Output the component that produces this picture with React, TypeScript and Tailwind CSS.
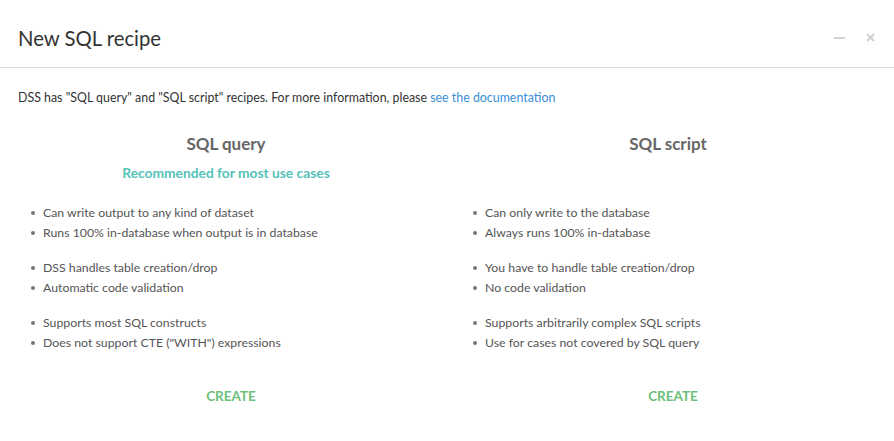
const queryGroups = [
  ["Can write output to any kind of dataset", "Runs 100% in-database when output is in database"],
  ["DSS handles table creation/drop", "Automatic code validation"],
  ["Supports most SQL constructs", 'Does not support CTE ("WITH") expressions'],
]

const scriptGroups = [
  ["Can only write to the database", "Always runs 100% in-database"],
  ["You have to handle table creation/drop", "No code validation"],
  ["Supports arbitrarily complex SQL scripts", "Use for cases not covered by SQL query"],
]

function RecipeColumn({ title, subtitle, groups }: { title: string; subtitle?: string; groups: string[][] }) {
  return (
    <div className="flex flex-col">
      <h3 className="text-center text-[17px] font-bold text-[#666] leading-[24px] h-[24px]">{title}</h3>
      <div className="text-center text-[13.8px] font-bold text-[#55c2b8] leading-[20px] h-[20px] mt-[7px]">
        {subtitle}
      </div>
      <div className="flex flex-col gap-[15px] mt-[20px] pl-[24px]">
        {groups.map((g, i) => (
          <ul key={i} className="flex flex-col">
            {g.map((item) => (
              <li key={item} className="flex items-center text-[12.3px] leading-[20px] text-[#555]">
                <span className="w-[4px] h-[4px] rounded-full bg-[#777] mr-[8px] ml-[2px]" />
                {item}
              </li>
            ))}
          </ul>
        ))}
      </div>
      <button className="mt-[33px] ml-[10px] self-center text-[13.5px] font-bold text-[#6cc17a] leading-[20px]">
        CREATE
      </button>
    </div>
  )
}

export default function App() {
  return (
    <div className="w-[894px] h-[441px] bg-white font-['Lato',sans-serif] text-[#333]">
      <div className="h-[68px] flex items-center justify-between pl-[18px] pr-[18px] pt-[8px] border-b border-[#dedede]">
        <h2 className="text-[20.3px] text-[#333] leading-[28px]">New SQL recipe</h2>
        <div className="flex items-center gap-[21px] text-[#cfcfcf] pr-[1px]">
          <span className="w-[11px] h-[2px] bg-[#d3d3d3]" />
          <svg width="9" height="9" viewBox="0 0 9 9" stroke="#cfcfcf" strokeWidth="1.8">
            <path d="M1 1 L8 8 M8 1 L1 8" />
          </svg>
        </div>
      </div>
      <p className="px-[18px] pt-[20px] text-[12.4px] leading-[20px] text-[#333]">
        DSS has "SQL query" and "SQL script" recipes. For more information, please{" "}
        <a className="text-[#3a8fd6]">see the documentation</a>
      </p>
      <div className="grid grid-cols-2 px-[5px] mt-[24px]">
        <RecipeColumn title="SQL query" subtitle="Recommended for most use cases" groups={queryGroups} />
        <RecipeColumn title="SQL script" groups={scriptGroups} />
      </div>
    </div>
  )
}
